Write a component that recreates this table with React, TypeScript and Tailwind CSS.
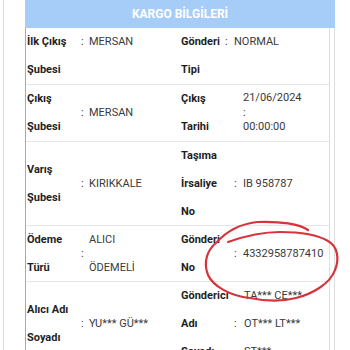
const font = { fontFamily: 'Roboto, "Noto Sans", Arial, sans-serif' };

const Label = ({ lines }: { lines: string[] }) => (
  <div className="flex h-full flex-col justify-center">
    {lines.map((l, i) => (
      <div key={i} className="h-[28px] whitespace-nowrap text-[11px] font-bold leading-[28px] text-[#1f1f1f]">
        {l}
      </div>
    ))}
  </div>
);

const Value = ({ lines, lh = 'leading-[28px] h-[28px]' }: { lines: string[]; lh?: string }) => (
  <div className="flex h-full flex-col justify-center">
    {lines.map((l, i) => (
      <div key={i} className={`whitespace-nowrap text-[11px] text-[#3a3a3a] ${lh}`}>
        {l}
      </div>
    ))}
  </div>
);

const Colon = () => (
  <div className="flex h-full items-center text-[11px] leading-[28px] text-[#3a3a3a]">:</div>
);

const RedCircle = () => (
  <svg className="pointer-events-none absolute left-0 top-0" width="350" height="350" viewBox="0 0 350 350">
    <path
      d="M308,230 C300,224 280,221 257,222 C240,224 226,232 217,242 C207,250 203,262 208,275 C213,286 230,296 250,298 C265,301 280,302 296,298 C312,294 330,284 335,270 C340,258 337,246 328,241 C318,235 300,232 280,232 C262,232 245,236 228,242"
      fill="none"
      stroke="#d8323b"
      strokeWidth="2.2"
      strokeLinecap="round"
    />
  </svg>
);

export default function App() {
  return (
    <div className="relative flex h-[350px] w-[350px] items-start overflow-hidden bg-white" style={font}>
      <div className="w-[3px] shrink-0" />
      <div className="h-[350px] w-px shrink-0 bg-[#dcdcdc]" />
      <div className="w-[21px] shrink-0" />

      <div className="flex w-[310px] shrink-0 flex-col">
        {/* Header */}
        <div className="flex h-[28px] shrink-0 items-center justify-center bg-[#a6cdf7] text-[12px] font-bold text-white">
          KARGO BİLGİLERİ
        </div>

        <div className="flex shrink-0 border-r border-[#dedede]">
          <div className="w-[305px] border-x border-l-[#a8a8a8] border-r-[#dedede]">
            {/* Row 1 */}
            <div className="flex h-[57px] border-b border-[#e6e6e6]">
              <div className="w-[55px] pl-[1px]"><Label lines={['İlk Çıkış', 'Şubesi']} /></div>
              <div className="w-[8px] text-[11px] leading-[28px] text-[#3a3a3a]">:</div>
              <div className="w-[92px] text-[11px] leading-[28px] text-[#3a3a3a]">MERSAN</div>
              <div className="w-[44px]"><Label lines={['Gönderi', 'Tipi']} /></div>
              <div className="w-[9px] text-[11px] leading-[28px] text-[#3a3a3a]">:</div>
              <div className="flex-1 text-[11px] leading-[28px] text-[#3a3a3a]">NORMAL</div>
            </div>

            {/* Row 2 */}
            <div className="flex h-[57px] border-b border-[#e6e6e6]">
              <div className="w-[55px] pl-[1px]"><Label lines={['Çıkış', 'Şubesi']} /></div>
              <div className="w-[8px]"><Colon /></div>
              <div className="w-[92px]"><Value lines={['MERSAN']} /></div>
              <div className="w-[53px]"><Label lines={['Çıkış', 'Tarihi']} /></div>
              <div className="w-[9px]" />
              <div className="flex-1">
                <Value lines={['21/06/2024', ':', '00:00:00']} lh="leading-[14.5px] h-[14.5px]" />
              </div>
            </div>

            {/* Row 3 */}
            <div className="flex h-[84px] border-b border-[#e6e6e6]">
              <div className="w-[55px] pl-[1px]"><Label lines={['Varış', 'Şubesi']} /></div>
              <div className="w-[8px]"><Colon /></div>
              <div className="w-[92px]"><Value lines={['KIRIKKALE']} /></div>
              <div className="w-[53px]"><Label lines={['Taşıma', 'İrsaliye', 'No']} /></div>
              <div className="w-[9px]"><Colon /></div>
              <div className="flex-1"><Value lines={['IB 958787']} /></div>
            </div>

            {/* Row 4 */}
            <div className="flex h-[56px] border-b border-[#e6e6e6]">
              <div className="w-[55px] pl-[1px]"><Label lines={['Ödeme', 'Türü']} /></div>
              <div className="w-[8px]"><Colon /></div>
              <div className="w-[92px]"><Value lines={['ALICI', 'ÖDEMELİ']} /></div>
              <div className="w-[53px]"><Label lines={['Gönderi', 'No']} /></div>
              <div className="w-[9px]"><Colon /></div>
              <div className="flex-1"><Value lines={['4332958787410']} /></div>
            </div>

            {/* Row 5 */}
            <div className="flex h-[84px] border-b border-[#e6e6e6]">
              <div className="w-[55px] pl-[1px]"><Label lines={['Alıcı Adı', 'Soyadı']} /></div>
              <div className="w-[8px]"><Colon /></div>
              <div className="w-[92px]"><Value lines={['YU*** GÜ***']} /></div>
              <div className="w-[53px]"><Label lines={['Gönderici', 'Adı', 'Soyadı']} /></div>
              <div className="w-[9px]"><Colon /></div>
              <div className="flex-1 pl-px"><Value lines={['TA*** CE***', 'OT*** LT***', 'ST***']} /></div>
            </div>
          </div>
        </div>
      </div>

      <RedCircle />
    </div>
  );
}
